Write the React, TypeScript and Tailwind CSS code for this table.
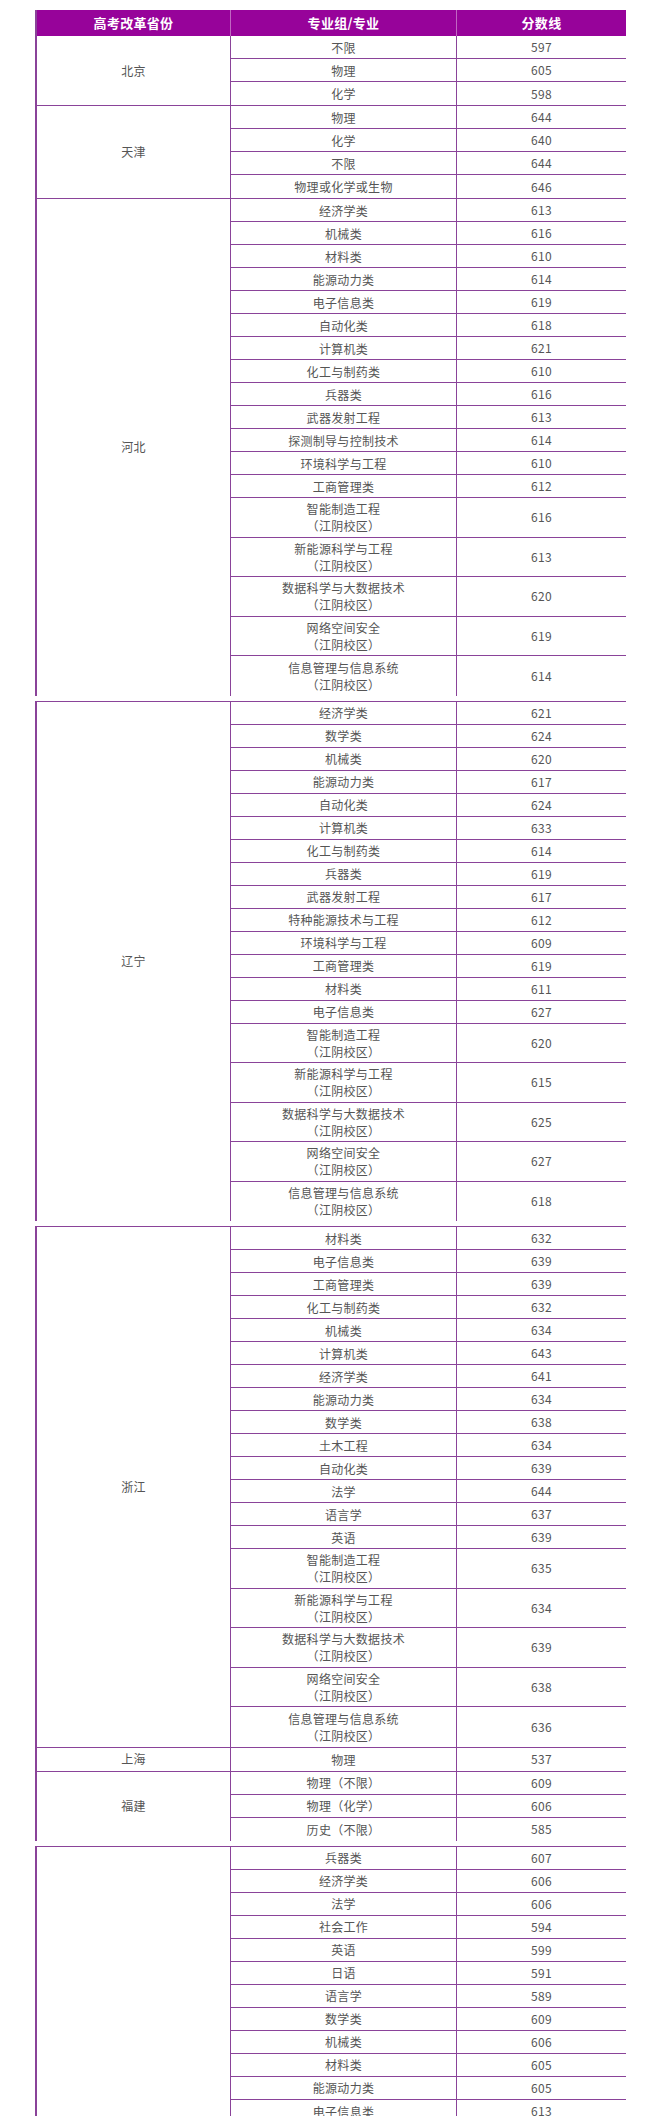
const line = "border-[#8a4399]";

type Item = [string, number, boolean?];

interface Block {
  province: string;
  rows: Item[];
}

const J = true; // 江阴校区 two-line row

const segments: Block[][] = [
  [
    { province: "北京", rows: [["不限", 597], ["物理", 605], ["化学", 598]] },
    {
      province: "天津",
      rows: [["物理", 644], ["化学", 640], ["不限", 644], ["物理或化学或生物", 646]],
    },
    {
      province: "河北",
      rows: [
        ["经济学类", 613],
        ["机械类", 616],
        ["材料类", 610],
        ["能源动力类", 614],
        ["电子信息类", 619],
        ["自动化类", 618],
        ["计算机类", 621],
        ["化工与制药类", 610],
        ["兵器类", 616],
        ["武器发射工程", 613],
        ["探测制导与控制技术", 614],
        ["环境科学与工程", 610],
        ["工商管理类", 612],
        ["智能制造工程", 616, J],
        ["新能源科学与工程", 613, J],
        ["数据科学与大数据技术", 620, J],
        ["网络空间安全", 619, J],
        ["信息管理与信息系统", 614, J],
      ],
    },
  ],
  [
    {
      province: "辽宁",
      rows: [
        ["经济学类", 621],
        ["数学类", 624],
        ["机械类", 620],
        ["能源动力类", 617],
        ["自动化类", 624],
        ["计算机类", 633],
        ["化工与制药类", 614],
        ["兵器类", 619],
        ["武器发射工程", 617],
        ["特种能源技术与工程", 612],
        ["环境科学与工程", 609],
        ["工商管理类", 619],
        ["材料类", 611],
        ["电子信息类", 627],
        ["智能制造工程", 620, J],
        ["新能源科学与工程", 615, J],
        ["数据科学与大数据技术", 625, J],
        ["网络空间安全", 627, J],
        ["信息管理与信息系统", 618, J],
      ],
    },
  ],
  [
    {
      province: "浙江",
      rows: [
        ["材料类", 632],
        ["电子信息类", 639],
        ["工商管理类", 639],
        ["化工与制药类", 632],
        ["机械类", 634],
        ["计算机类", 643],
        ["经济学类", 641],
        ["能源动力类", 634],
        ["数学类", 638],
        ["土木工程", 634],
        ["自动化类", 639],
        ["法学", 644],
        ["语言学", 637],
        ["英语", 639],
        ["智能制造工程", 635, J],
        ["新能源科学与工程", 634, J],
        ["数据科学与大数据技术", 639, J],
        ["网络空间安全", 638, J],
        ["信息管理与信息系统", 636, J],
      ],
    },
    { province: "上海", rows: [["物理", 537]] },
    {
      province: "福建",
      rows: [["物理（不限）", 609], ["物理（化学）", 606], ["历史（不限）", 585]],
    },
  ],
  [
    {
      province: "",
      rows: [
        ["兵器类", 607],
        ["经济学类", 606],
        ["法学", 606],
        ["社会工作", 594],
        ["英语", 599],
        ["日语", 591],
        ["语言学", 589],
        ["数学类", 609],
        ["机械类", 606],
        ["材料类", 605],
        ["能源动力类", 605],
        ["电子信息类", 613],
      ],
    },
  ],
];

function Header() {
  return (
    <div className="flex h-[26px] bg-[#97039a] text-[13px] font-bold text-white">
      <div className="flex w-[194px] items-center justify-center border-r border-white/40">
        高考改革省份
      </div>
      <div className="flex w-[226px] items-center justify-center border-r border-white/40">
        专业组/专业
      </div>
      <div className="flex flex-1 items-center justify-center">分数线</div>
    </div>
  );
}

function ScoreRow({ item, last }: { item: Item; last: boolean }) {
  const [major, score, campus] = item;
  return (
    <div
      className={`flex ${campus ? "h-[39.5px]" : "h-[23px]"} ${
        last ? "" : `border-b ${line}`
      }`}
    >
      <div
        className={`flex w-[226px] flex-col items-center justify-center border-r ${line} leading-[17px]`}
      >
        <span>{major}</span>
        {campus && <span>（江阴校区）</span>}
      </div>
      <div className="flex flex-1 items-center justify-center">{score}</div>
    </div>
  );
}

function ProvinceBlock({ block, last }: { block: Block; last: boolean }) {
  return (
    <div className={`flex ${last ? "" : `border-b ${line}`}`}>
      <div
        className={`flex w-[194px] shrink-0 items-center justify-center border-r ${line}`}
      >
        {block.province}
      </div>
      <div className="flex flex-1 flex-col">
        {block.rows.map((r, i) => (
          <ScoreRow key={i} item={r} last={i === block.rows.length - 1} />
        ))}
      </div>
    </div>
  );
}

export default function App() {
  return (
    <div
      className="min-h-[2116px] bg-white pt-[10px] pl-[35px] text-[12px] tracking-[0.3px] text-[#555]"
      style={{ fontFamily: '"Noto Sans CJK SC", "Noto Sans", sans-serif' }}
    >
      <div className="flex w-[591px] flex-col gap-[5px]">
        {segments.map((seg, si) => (
          <div
            key={si}
            className={`border-l-2 ${line} ${si > 0 ? `border-t ${line}` : ""}`}
          >
            {si === 0 && <Header />}
            {seg.map((b, bi) => (
              <ProvinceBlock key={bi} block={b} last={bi === seg.length - 1} />
            ))}
          </div>
        ))}
      </div>
    </div>
  );
}
